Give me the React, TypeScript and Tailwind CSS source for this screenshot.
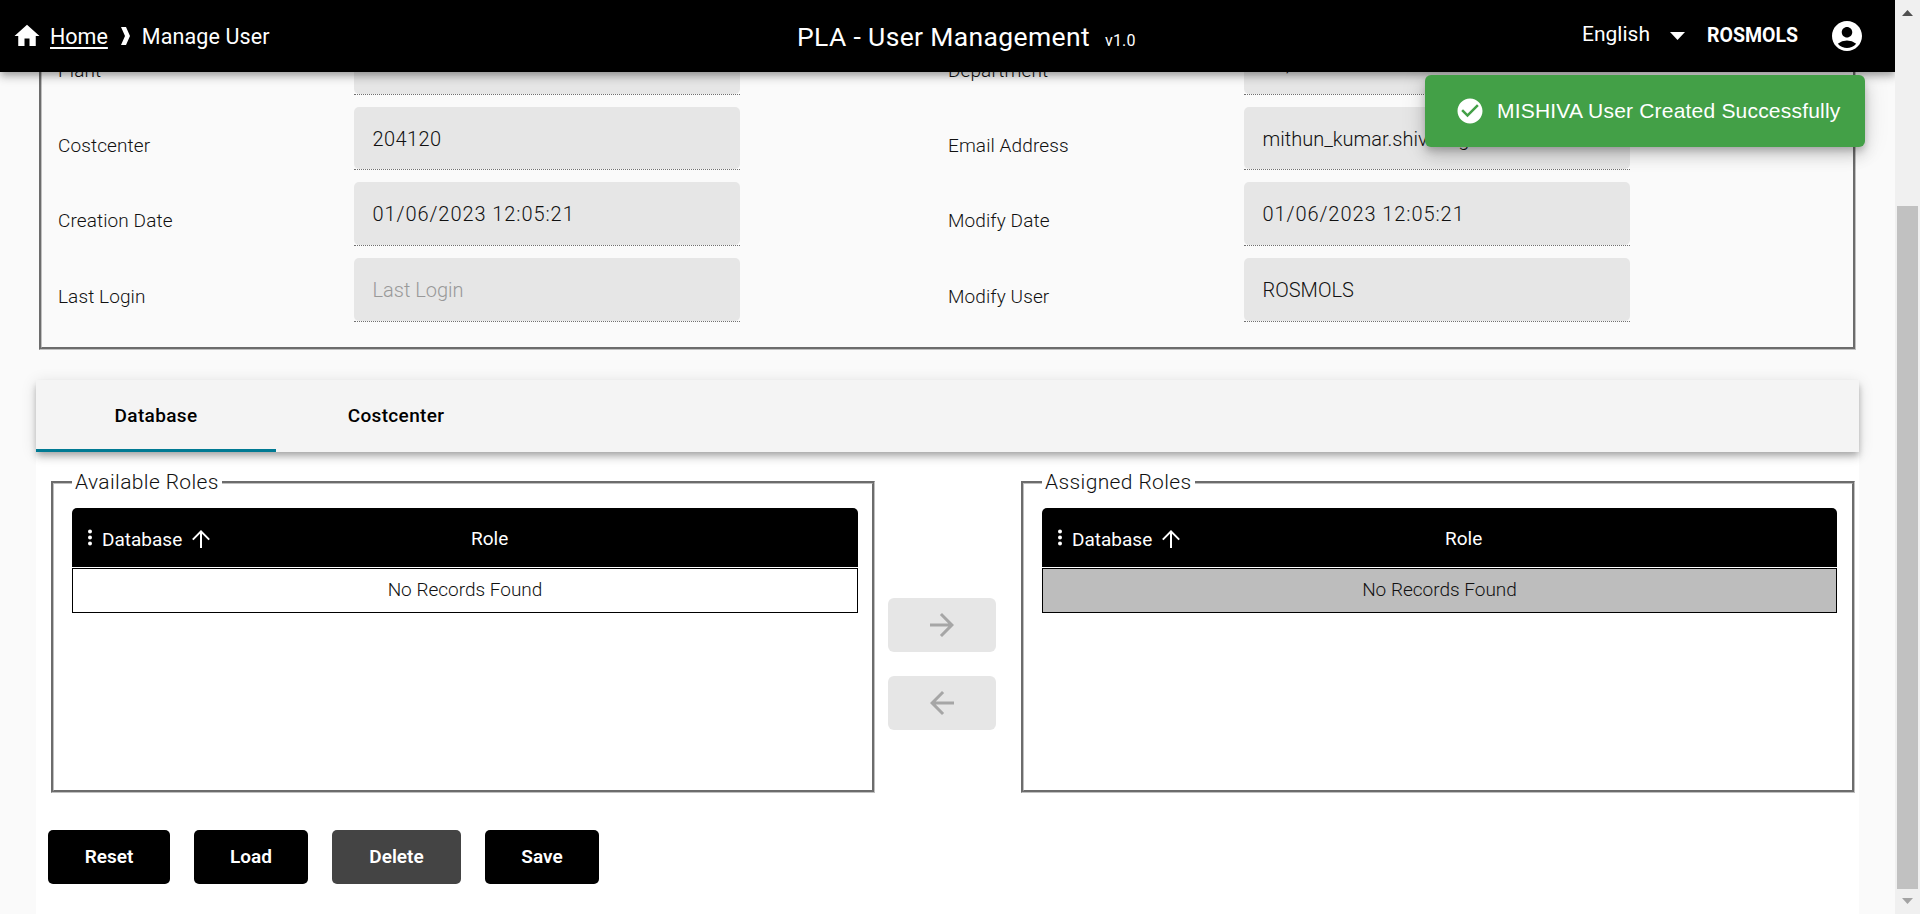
import React from "react";
import {
  MdHome,
  MdAccountCircle,
  MdArrowForward,
  MdArrowBack,
} from "react-icons/md";

type FieldProps = {
  label: string;
  value?: string;
  placeholder?: string;
  tall?: boolean;
  tracking?: string;
};

function Field({ label, value, placeholder, tall, tracking = "tracking-normal" }: FieldProps) {
  return (
    <div className="flex w-[890px]">
      <div className="w-[296px] pt-[25px] text-[19px] leading-[27px] font-light tracking-[0.1px]">{label}</div>
      <div className={`${tall ? "h-16" : "h-[63px]"} w-[386px] border-b border-dotted border-[#707070]`}>
        <div
          className={`${tracking} h-full rounded-[5px] bg-[#e6e6e6] pt-[19px] pl-[18.5px] text-[20px] leading-[26px] font-light`}
        >
          {value ?? <span className="text-[#999]">{placeholder}</span>}
        </div>
      </div>
    </div>
  );
}

type RolesBoxProps = { title: string; box: string; roleIndent: string; rowBg: string };

function RolesBox({ title, box, roleIndent, rowBg }: RolesBoxProps) {
  return (
    <fieldset className={`${box} h-[326px] min-w-0 border-[3px] border-[#c0c0c0] pl-[18px] [border-style:groove]`}>
      <legend className="pr-[3px] pl-[3px] text-[21px] leading-[31px] font-light tracking-[0.38px]">{title}</legend>
      <div className="mt-[10px]">
        <div className="flex h-[59px] items-center rounded-t-[5px] bg-black text-[19px] text-white">
          <div className="flex w-[268px] items-center pl-4">
            <svg className="h-[18px] w-1" viewBox="0 0 4 18" fill="currentColor">
              <circle cx="2" cy="2.6" r="2" />
              <circle cx="2" cy="8.6" r="2" />
              <circle cx="2" cy="14.6" r="2" />
            </svg>
            <span className="mt-[5px] ml-2.5">Database</span>
            <svg
              className="mt-[3px] ml-[10px] size-[18px]"
              viewBox="0 0 18 18"
              fill="none"
              stroke="currentColor"
              strokeWidth="2"
            >
              <path d="M9 18V1.5M0.8 9.6L9 1.4L17.2 9.6" />
            </svg>
          </div>
          <div className={`${roleIndent} mt-[3px]`}>Role</div>
        </div>
        <div
          className={`${rowBg} mt-px flex h-[45px] items-center justify-center border border-black text-[19px] font-light`}
        >
          No Records Found
        </div>
      </div>
    </fieldset>
  );
}

function Action({ children, className }: { children: React.ReactNode; className: string }) {
  return (
    <button className={`${className} h-[54px] rounded-[5px] text-[19px] font-semibold text-white`}>{children}</button>
  );
}

export default function App() {
  return (
    <div className="relative flex h-[914px] w-[1920px] overflow-hidden bg-[#fafafa] font-['Roboto','Liberation_Sans',sans-serif] text-[#111]">
      <div className="flex w-[1895px] flex-col">
        <header className="z-10 flex h-[72px] shrink-0 items-center bg-black text-white shadow-[0_3px_6px_-1.5px_rgba(0,0,0,0.2),0_6px_7.5px_rgba(0,0,0,0.14),0_1.5px_15px_rgba(0,0,0,0.12)]">
          <div className="flex w-[797px] items-center pl-[12px] text-[21.5px]">
            <MdHome className="size-[30px]" />
            <span className="mt-0.5 ml-2 underline decoration-2 underline-offset-[3px]">Home</span>
            <svg className="ml-[13px] h-[18px] w-[9px]" viewBox="0 0 9 18" fill="currentColor">
              <path d="M0 0H5L9 9L5 18H0L4 9Z" />
            </svg>
            <span className="mt-0.5 ml-3 tracking-[0.1px]">Manage User</span>
          </div>
          <div className="mt-0.5 flex flex-1 items-baseline">
            <span className="text-[26.5px] tracking-[0.35px]">PLA - User Management</span>
            <span className="ml-[15px] text-[16px] tracking-[0.2px]">v1.0</span>
          </div>
          <div className="flex w-[313px] items-center">
            <span className="mb-[3px] text-[21px]">English</span>
            <svg className="ml-5 h-[8px] w-[15px]" viewBox="0 0 15 8" fill="currentColor">
              <path d="M0 0H15L7.5 8Z" />
            </svg>
            <span className="ml-[22px] text-[19.5px] font-bold">ROSMOLS</span>
            <MdAccountCircle className="ml-[31px] size-9" />
          </div>
        </header>

        <main className="flex flex-1 flex-col px-9">
          <section className="-mt-[52px] ml-[3px] flex h-[330px] w-[1817px] border-[3px] border-t-0 border-[#c0c0c0] pt-3 pl-4 [border-style:groove]">
            <div className="flex flex-col gap-3">
              <Field label="Plant" value="" />
              <Field label="Costcenter" value="204120" tracking="tracking-[0.4px]" />
              <Field label="Creation Date" value="01/06/2023 12:05:21" tall tracking="tracking-[0.93px]" />
              <Field label="Last Login" placeholder="Last Login" tall />
            </div>
            <div className="flex flex-col gap-3">
              <Field label="Department" value="TE," />
              <Field label="Email Address" value="mithun_kumar.shivaling" />
              <Field label="Modify Date" value="01/06/2023 12:05:21" tall tracking="tracking-[0.93px]" />
              <Field label="Modify User" value="ROSMOLS" tall />
            </div>
          </section>

          <section className="mt-[30px] flex flex-1 flex-col bg-white">
            <div className="flex h-[72px] bg-[#f4f4f4] text-[19px] font-medium tracking-[0.35px] text-black shadow-[0_3px_6px_-1.5px_rgba(0,0,0,0.2),0_6px_7.5px_rgba(0,0,0,0.14),0_1.5px_15px_rgba(0,0,0,0.12)]">
              <div className="flex w-60 items-center justify-center border-b-[3px] border-[#007a93] pt-[3px]">
                Database
              </div>
              <div className="flex w-60 items-center justify-center">Costcenter</div>
            </div>
            <div className="flex pt-[15px] pl-[15px]">
              <RolesBox
                title="Available Roles"
                box="w-[824px] pr-[14px]"
                roleIndent="pl-[131px]"
                rowBg="bg-white"
              />
              <div className="ml-[13px] flex w-[133px] flex-col gap-6 pt-[131px]">
                <button className="flex h-[54px] w-[108px] items-center justify-center rounded-md bg-[#e6e6e6] text-[#a6a6a6]">
                  <MdArrowForward className="size-9" />
                </button>
                <button className="flex h-[54px] w-[108px] items-center justify-center rounded-md bg-[#e6e6e6] text-[#a6a6a6]">
                  <MdArrowBack className="size-9" />
                </button>
              </div>
              <RolesBox
                title="Assigned Roles"
                box="w-[834px] pr-[15px]"
                roleIndent="pl-[135px]"
                rowBg="bg-[#bdbdbd]"
              />
            </div>
            <div className="mt-[37px] flex gap-6 pl-3">
              <Action className="w-[122px] bg-black">Reset</Action>
              <Action className="w-[114px] bg-black">Load</Action>
              <Action className="w-[129px] bg-[#444]">Delete</Action>
              <Action className="w-[114px] bg-black">Save</Action>
            </div>
          </section>
        </main>
      </div>

      <div className="z-10 flex w-[25px] flex-col items-center bg-[#f0f0f0]">
        <svg className="mt-2.5 h-1.5 w-[11px]" viewBox="0 0 11 6" fill="#505050">
          <path d="M0 6L5.5 0L11 6Z" />
        </svg>
        <div className="mt-[190px] h-[683px] w-[21px] bg-[#c1c1c1]" />
        <svg className="mt-[9px] h-1.5 w-[11px]" viewBox="0 0 11 6" fill="#a3a3a3">
          <path d="M0 0L5.5 6L11 0Z" />
        </svg>
      </div>

      <div className="absolute top-[75px] left-[1425px] z-20 flex h-[72px] w-[440px] items-center rounded-[6px] bg-[#43a047] pl-[30px] font-['Liberation_Sans',Arial,sans-serif] text-[21px] tracking-[0.2px] text-white shadow-[0_4.5px_7.5px_-1.5px_rgba(0,0,0,0.2),0_9px_15px_rgba(0,0,0,0.14),0_1.5px_27px_rgba(0,0,0,0.12)]">
        <svg className="size-[30px]" viewBox="0 0 24 24" fill="currentColor">
          <path d="M12 2C6.48 2 2 6.48 2 12s4.48 10 10 10 10-4.48 10-10S17.52 2 12 2zm-2 15l-5-5 1.41-1.41L10 14.17l7.59-7.59L19 8l-9 9z" />
        </svg>
        <span className="mb-px ml-3">MISHIVA User Created Successfully</span>
      </div>
    </div>
  );
}
